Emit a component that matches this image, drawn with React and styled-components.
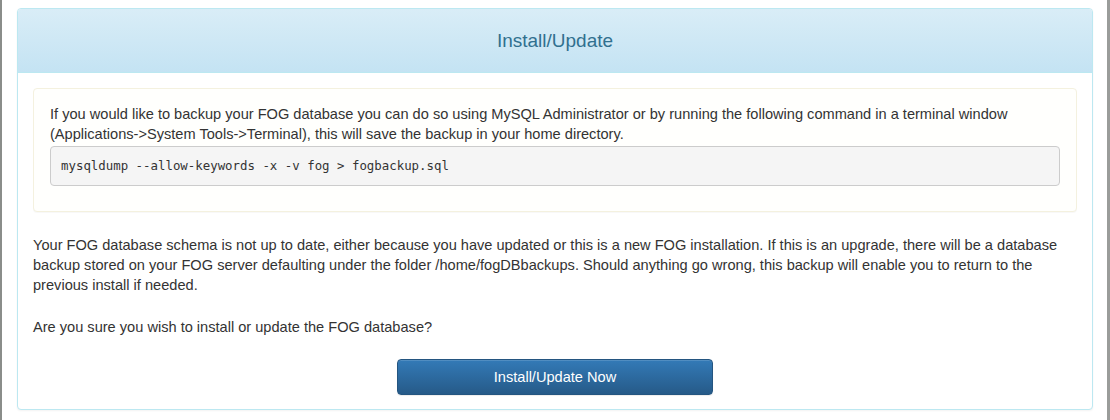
import React from "react";
import styled, { createGlobalStyle } from "styled-components";

const GlobalStyle = createGlobalStyle`
  html, body {
    margin: 0;
    padding: 0;
    background: #ffffff;
  }
  body {
    font-family: "Liberation Sans", Arial, sans-serif;
    font-size: 14.6px;
    line-height: 20px;
    color: #333333;
  }
`;

const Page = styled.div`
  width: 1110px;
  height: 420px;
  box-sizing: border-box;
  padding: 8px 14px 0 15px;
  border-left: 2px solid #8a8d8a;
  border-right: 3px solid #9a9c9a;
`;

const Panel = styled.div`
  border: 1px solid #bce8f1;
  border-radius: 4px;
  background: #fff;
  box-shadow: 0 1px 2px rgba(0, 0, 0, 0.05);
`;

const PanelHeading = styled.div`
  height: 63px;
  display: flex;
  align-items: center;
  justify-content: center;
  border-bottom: 1px solid #bce8f1;
  border-radius: 3px 3px 0 0;
  background: linear-gradient(to bottom, #d9edf7 0%, #c4e3f3 100%);
`;

const Title = styled.h3`
  margin: 0;
  font-size: 19px;
  font-weight: normal;
  color: #31708f;
  line-height: 20px;
`;

const PanelBody = styled.div`
  padding: 15px 15px 14px 15px;
`;

const Well = styled.div`
  border: 1px solid #f4f1df;
  border-radius: 4px;
  background: #fffffd;
  padding: 15px 16px 25px 16px;
  box-shadow: 0 1px 1px rgba(0, 0, 0, 0.03);
  margin-bottom: 23px;
`;

const Text = styled.p`
  margin: 0 0 ${(p) => p.gap || 0}px 0;
`;

const Code = styled.pre`
  margin: 2px 0 0 0;
  padding: 9px 10px;
  background: #f5f5f5;
  border: 1px solid #cccccc;
  border-radius: 4px;
  font-family: "DejaVu Sans Mono", Menlo, Consolas, monospace;
  font-size: 12.4px;
  line-height: 20px;
  color: #333;
`;

const Actions = styled.div`
  display: flex;
  justify-content: center;
  margin-top: 22px;
`;

const Button = styled.button`
  width: 316px;
  height: 36px;
  border: 1px solid #245580;
  border-radius: 4px;
  background: linear-gradient(to bottom, #337ab7 0%, #265a88 100%);
  color: #ffffff;
  font-family: "Liberation Sans", Arial, sans-serif;
  font-size: 14.6px;
  cursor: pointer;
  box-shadow: inset 0 1px 0 rgba(255, 255, 255, 0.15), 0 1px 1px rgba(0, 0, 0, 0.075);
`;

export default function App() {
  return (
    <>
      <GlobalStyle />
      <Page>
        <Panel>
          <PanelHeading>
            <Title>Install/Update</Title>
          </PanelHeading>
          <PanelBody>
            <Well>
              <Text>
                If you would like to backup your FOG database you can do so using MySQL
                Administrator or by running the following command in a terminal window
                (Applications-&gt;System Tools-&gt;Terminal), this will save the backup in your
                home directory.
              </Text>
              <Code>mysqldump --allow-keywords -x -v fog &gt; fogbackup.sql</Code>
            </Well>
            <Text gap={22}>
              Your FOG database schema is not up to date, either because you have updated or
              this is a new FOG installation. If this is an upgrade, there will be a database
              backup stored on your FOG server defaulting under the folder /home/fogDBbackups.
              Should anything go wrong, this backup will enable you to return to the previous
              install if needed.
            </Text>
            <Text>Are you sure you wish to install or update the FOG database?</Text>
            <Actions>
              <Button>Install/Update Now</Button>
            </Actions>
          </PanelBody>
        </Panel>
      </Page>
    </>
  );
}
